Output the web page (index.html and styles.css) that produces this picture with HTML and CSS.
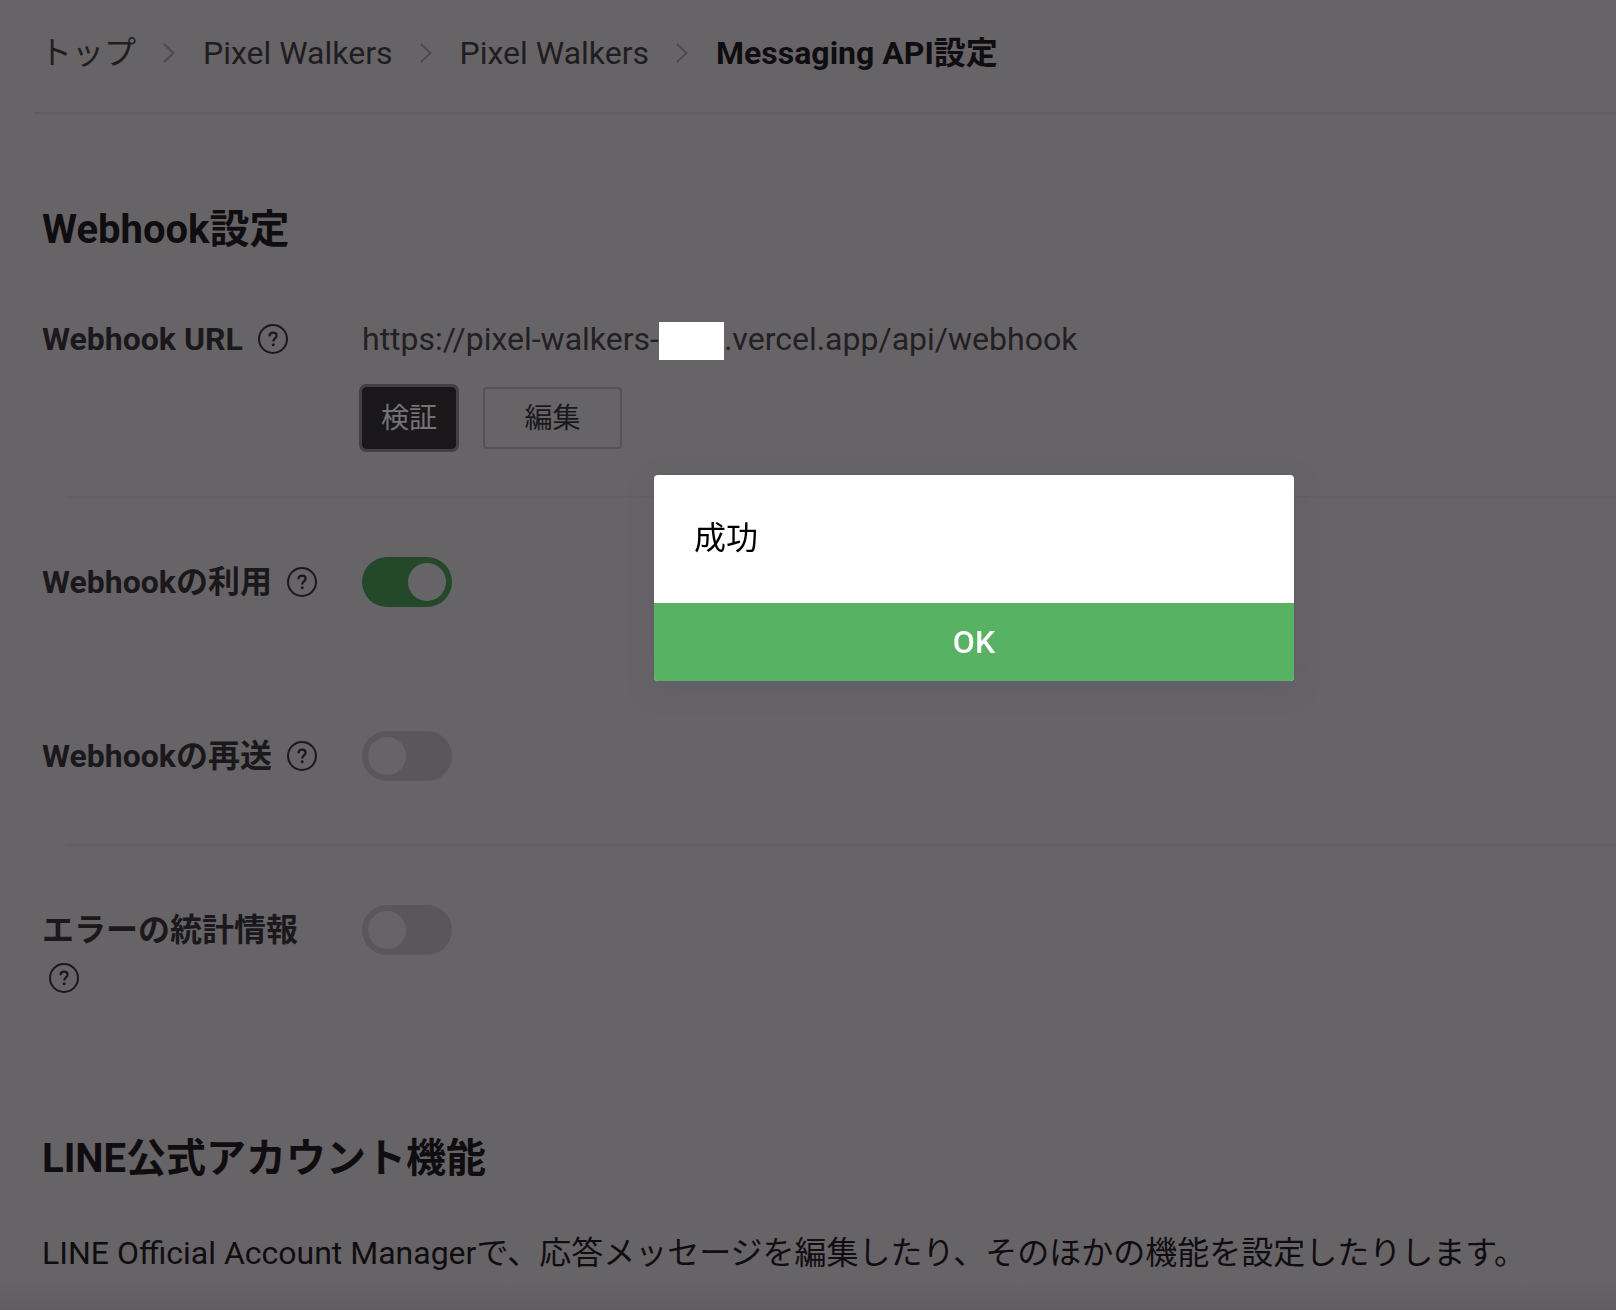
FILE: index.html
```html
<!DOCTYPE html>
<html lang="ja">
<head>
<meta charset="utf-8">
<meta name="viewport" content="width=device-width, initial-scale=1">
<title>Messaging API設定</title>
<link rel="stylesheet" href="styles.css">
</head>
<body>
<svg class="sprite" aria-hidden="true">
  <symbol id="help" viewBox="0 0 30 30">
    <circle cx="15" cy="15" r="14" fill="none" stroke="currentColor" stroke-width="2"/>
    <path d="M11.5 12.2C11.5 10 13 8.700 15.100 8.700C17.200 8.700 18.600 10 18.600 11.800C18.600 14.200 15.200 14.500 15.200 17.400" fill="none" stroke="currentColor" stroke-width="2.200"/>
    <circle cx="15.200" cy="20.700" r="1.500" fill="currentColor"/>
  </symbol>
  <symbol id="chevron" viewBox="0 0 12 20">
    <path d="M1 1L10.500 10L1 19" fill="none" stroke="currentColor" stroke-width="2"/>
  </symbol>
</svg>

<div class="page">
  <nav class="breadcrumb" aria-label="パンくずリスト">
    <a href="#">トップ</a>
    <svg class="chevron"><use href="#chevron"/></svg>
    <a href="#">Pixel Walkers</a>
    <svg class="chevron"><use href="#chevron"/></svg>
    <a href="#">Pixel Walkers</a>
    <svg class="chevron"><use href="#chevron"/></svg>
    <strong>Messaging API設定</strong>
  </nav>

  <main class="content">
    <section>
      <h1 class="heading">Webhook設定</h1>
      <div class="group">
        <div class="row">
          <div class="label">Webhook URL <svg class="help"><use href="#help"/></svg></div>
          <div class="value">
            <p class="url">https://pixel-walkers-<span class="mask"></span>.vercel.app/api/webhook</p>
            <div class="actions">
              <button class="btn btn-verify" type="button">検証</button>
              <button class="btn btn-edit" type="button">編集</button>
            </div>
          </div>
        </div>
      </div>
      <div class="group">
        <div class="row">
          <label class="label" for="use">Webhookの利用 <svg class="help"><use href="#help"/></svg></label>
          <div class="control"><input class="toggle" id="use" type="checkbox" checked></div>
        </div>
        <div class="row">
          <label class="label" for="resend">Webhookの再送 <svg class="help"><use href="#help"/></svg></label>
          <div class="control"><input class="toggle" id="resend" type="checkbox"></div>
        </div>
      </div>
      <div class="group">
        <div class="row">
          <label class="label" for="stats">エラーの統計情報 <svg class="help"><use href="#help"/></svg></label>
          <div class="control"><input class="toggle" id="stats" type="checkbox"></div>
        </div>
      </div>
    </section>

    <section class="features">
      <h2 class="heading">LINE公式アカウント機能</h2>
      <p class="lead">LINE Official Account Managerで、応答メッセージを編集したり、そのほかの機能を設定したりします。</p>
    </section>
  </main>
</div>

<div class="overlay">
  <div class="dialog" role="alertdialog" aria-modal="true" aria-labelledby="message">
    <p class="message" id="message">成功</p>
    <button class="ok" type="button">OK</button>
  </div>
</div>
</body>
</html>
```
FILE: styles.css
```css
* {
  box-sizing: border-box;
}

body {
  margin: 0;
  background: #676467;
  color: #0f0d10;
  font-family: Roboto, "Noto Sans CJK JP", sans-serif;
  font-size: 32px;
  line-height: 48px;
}

h1, h2, p {
  margin: 0;
}

button {
  font-family: inherit;
}

.sprite {
  display: none;
}

.page {
  min-height: 100vh;
  background: linear-gradient(to top, #605d61, #676467 28px);
}

.breadcrumb {
  display: flex;
  align-items: center;
  margin-left: 34px;
  padding: 29px 6px 35px;
  border-bottom: 2px solid #5f5c60;
}

.breadcrumb a {
  color: #1f1d20;
  text-decoration: none;
}

.chevron {
  width: 12px;
  height: 20px;
  margin: 0 28px 0 27px;
  color: #4c494d;
}

.content {
  padding: 88px 0 32px 42px;
}

.heading {
  font-size: 40px;
  line-height: 56px;
}

.group {
  padding-top: 60px;
}

.group:first-of-type {
  padding-top: 57px;
}

.group:not(:last-child)::after {
  content: "";
  display: block;
  height: 2px;
  margin: 64px 0 0 24px;
  background: #636063;
}

.group:first-of-type::after {
  margin-top: 47px;
}

.row {
  display: grid;
  grid-template-columns: 280px 1fr;
  column-gap: 40px;
}

.row + .row {
  margin-top: 126px;
}

.label {
  color: #1a181b;
  font-weight: 700;
}

.help {
  width: 30px;
  height: 30px;
  margin-left: 7px;
  vertical-align: -4px;
}

.url {
  color: #222023;
}

.mask {
  display: inline-block;
  width: 65px;
  height: 38px;
  background: #fff;
  vertical-align: -10px;
}

.actions {
  display: flex;
  gap: 27px;
  margin-top: 24px;
}

.btn {
  height: 62px;
  padding: 0 0 4px;
  border-radius: 4px;
  font-size: 28px;
}

.btn-verify {
  width: 94px;
  border: 0;
  outline: 3px solid #434044;
  background: #1a171b;
  color: #767377;
}

.btn-edit {
  width: 139px;
  border: 2px solid #565357;
  background: transparent;
  color: #1a181b;
}

.control {
  display: flex;
  align-items: center;
  height: 48px;
}

.toggle {
  display: flex;
  align-items: center;
  appearance: none;
  flex: none;
  width: 90px;
  height: 50px;
  margin: 0;
  padding: 0 6px;
  border-radius: 25px;
  background: #5a575b;
}

.toggle::before {
  content: "";
  width: 38px;
  height: 38px;
  border-radius: 50%;
  background: #676467;
}

.toggle:checked {
  justify-content: flex-end;
  background: #23482a;
}

.features {
  padding-top: 129px;
}

.lead {
  margin-top: 42px;
}

.overlay {
  position: fixed;
  inset: 0;
  display: flex;
  align-items: flex-start;
  justify-content: center;
  padding: 475px 0 0 332px;
}

.dialog {
  width: 640px;
  overflow: hidden;
  border-radius: 4px;
  background: #fff;
  color: #000;
  box-shadow: 0 8px 24px rgba(84, 84, 104, 0.4);
}

.message {
  padding: 39px 40px 41px;
}

.ok {
  display: block;
  width: 100%;
  height: 78px;
  border: 0;
  background: #57b363;
  color: #fff;
  font-size: 32px;
  font-weight: 500;
}
```
